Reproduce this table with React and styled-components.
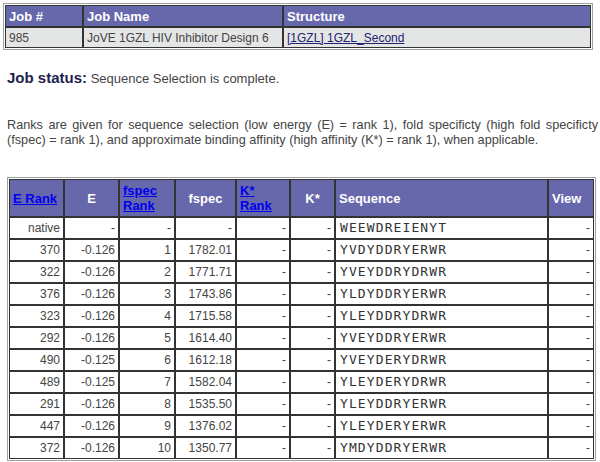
import React from 'react';
import styled, { createGlobalStyle } from 'styled-components';

const Global = createGlobalStyle`
  body {
    margin: 0;
    padding: 3px;
    background: #fff;
    font-family: "Liberation Sans", Arial, sans-serif;
    color: #444;
  }
`;

const Table = styled.table`
  box-sizing: border-box;
  border-collapse: separate;
  border-spacing: 0;
  border: 1px solid #a0a0a0;
  padding: 1px;
  table-layout: fixed;
  width: ${p => p.$width}px;
  margin-left: ${p => p.$indent || 0}px;
`;

const Th = styled.th`
  box-sizing: border-box;
  background: #6668ab;
  color: #fff;
  border: 1px solid #333;
  font-size: 13px;
  font-weight: bold;
  line-height: 15px;
  height: ${p => p.$h || 38}px;
  padding: 0 3px;
  text-align: ${p => p.$align || 'left'};
  vertical-align: middle;
  width: ${p => (p.$w ? `${p.$w}px` : 'auto')};
`;

const HeadLink = styled.a`
  color: #0000ee;
  text-decoration: underline;
`;

const Td = styled.td`
  box-sizing: border-box;
  background: ${p => p.$bg || '#fff'};
  border: 1px solid #333;
  font-size: 12px;
  line-height: 14px;
  height: ${p => p.$h || 22}px;
  padding: 0 3px;
  text-align: ${p => p.$align || 'right'};
  vertical-align: middle;
  color: #444;
  white-space: nowrap;
`;

const SeqTd = styled(Td)`
  font-family: "DejaVu Sans Mono", monospace;
  font-size: 13px;
  letter-spacing: 1.1px;
  text-align: left;
  padding-left: 4px;
  color: #333;
`;

const StructLink = styled.a`
  color: #22226e;
  text-decoration: underline;
`;

const Status = styled.p`
  margin: 19px 0 0 4px;
  font-size: 13px;
  line-height: 18px;
  color: #444;
`;

const StatusLabel = styled.b`
  font-size: 15px;
  color: #1e1e50;
`;

const Note = styled.p`
  margin: 30px 0 29px 4px;
  font-size: 12.7px;
  line-height: 15px;
  color: #444;
  width: 591px;
  text-align: justify;
`;

const rows = [
  ['native', '-', '-', '-', '-', '-', 'WEEWDREIENYT'],
  ['370', '-0.126', '1', '1782.01', '-', '-', 'YVDYDDRYERWR'],
  ['322', '-0.126', '2', '1771.71', '-', '-', 'YVEYDDRYDRWR'],
  ['376', '-0.126', '3', '1743.86', '-', '-', 'YLDYDDRYERWR'],
  ['323', '-0.126', '4', '1715.58', '-', '-', 'YLEYDDRYDRWR'],
  ['292', '-0.126', '5', '1614.40', '-', '-', 'YVEYDDRYERWR'],
  ['490', '-0.125', '6', '1612.18', '-', '-', 'YVEYDERYDRWR'],
  ['489', '-0.125', '7', '1582.04', '-', '-', 'YLEYDERYDRWR'],
  ['291', '-0.126', '8', '1535.50', '-', '-', 'YLEYDDRYERWR'],
  ['447', '-0.126', '9', '1376.02', '-', '-', 'YLEYDERYERWR'],
  ['372', '-0.126', '10', '1350.77', '-', '-', 'YMDYDDRYERWR'],
];

export default function App() {
  return (
    <>
      <Global />
      <Table $width={590}>
        <thead>
          <tr>
            <Th $w={78} $h={22}>Job #</Th>
            <Th $w={200} $h={22}>Job Name</Th>
            <Th $h={22}>Structure</Th>
          </tr>
        </thead>
        <tbody>
          <tr>
            <Td $bg="#e4e6e6" $align="left" $h={21}>985</Td>
            <Td $bg="#e4e6e6" $align="left" $h={21}>JoVE 1GZL HIV Inhibitor Design 6</Td>
            <Td $bg="#e4e6e6" $align="left" $h={21}>
              <StructLink href="#">[1GZL] 1GZL_Second</StructLink>
            </Td>
          </tr>
        </tbody>
      </Table>

      <Status>
        <StatusLabel>Job status:</StatusLabel> Sequence Selection is complete.
      </Status>

      <Note>
        Ranks are given for sequence selection (low energy (E) = rank 1), fold specificty (high fold specificty
        (fspec) = rank 1), and approximate binding affinity (high affinity (K*) = rank 1), when applicable.
      </Note>

      <Table $width={589} $indent={4}>
        <thead>
          <tr>
            <Th $w={55}><HeadLink href="#">E Rank</HeadLink></Th>
            <Th $w={55} $align="center">E</Th>
            <Th $w={56}><HeadLink href="#">fspec<br />Rank</HeadLink></Th>
            <Th $w={61} $align="center">fspec</Th>
            <Th $w={54}><HeadLink href="#">K*<br />Rank</HeadLink></Th>
            <Th $w={45} $align="center">K*</Th>
            <Th $w={213}>Sequence</Th>
            <Th>View</Th>
          </tr>
        </thead>
        <tbody>
          {rows.map(r => (
            <tr key={r[0]}>
              <Td>{r[0]}</Td>
              <Td>{r[1]}</Td>
              <Td>{r[2]}</Td>
              <Td>{r[3]}</Td>
              <Td>{r[4]}</Td>
              <Td>{r[5]}</Td>
              <SeqTd>{r[6]}</SeqTd>
              <Td>-</Td>
            </tr>
          ))}
        </tbody>
      </Table>
    </>
  );
}
